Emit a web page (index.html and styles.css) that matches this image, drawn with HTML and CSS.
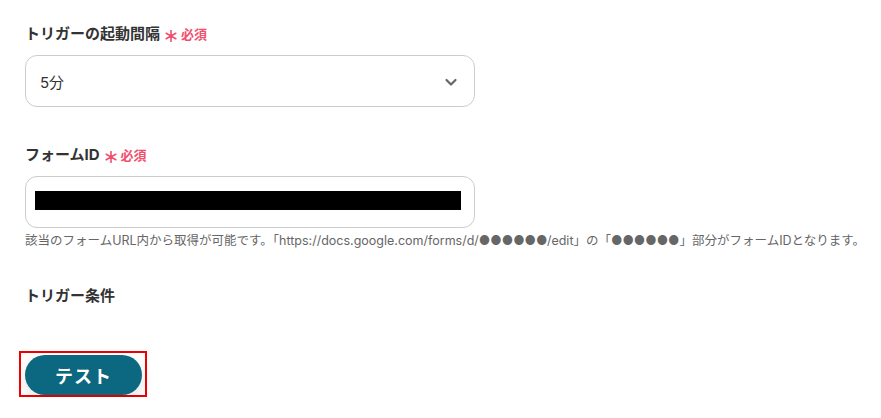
FILE: index.html
```html
<!DOCTYPE html>
<html lang="ja">
<head>
  <meta charset="UTF-8" />
  <title>トリガー設定</title>
  <link rel="stylesheet" href="styles.css">
</head>
<body>
  <div class="form">
    <div class="field">
      <label class="label">トリガーの起動間隔<span class="req"><svg class="mark" width="12" height="12" viewBox="0 0 12 12"><path d="M6 0.5 V11.5 M1.2 3.25 L10.8 8.75 M1.2 8.75 L10.8 3.25" stroke="currentColor" stroke-width="1.6" stroke-linecap="round" /></svg>必須</span></label>
      <div class="select">
        <span class="value">5分</span>
        <svg class="chevron" width="14" height="14" viewBox="0 0 14 14">
          <path d="M2.5 5 L7 9.5 L11.5 5" fill="none" stroke="#666" stroke-width="2.2" stroke-linecap="round" stroke-linejoin="round" />
        </svg>
      </div>
    </div>

    <div class="field">
      <label class="label">フォームID<span class="req"><svg class="mark" width="12" height="12" viewBox="0 0 12 12"><path d="M6 0.5 V11.5 M1.2 3.25 L10.8 8.75 M1.2 8.75 L10.8 3.25" stroke="currentColor" stroke-width="1.6" stroke-linecap="round" /></svg>必須</span></label>
      <div class="input">
        <div class="masked"></div>
      </div>
      <p class="hint">該当のフォームURL内から取得が可能です。「https://docs.google.com/forms/d/●●●●●●/edit」の「●●●●●●」部分がフォームIDとなります。</p>
    </div>

    <div class="field">
      <label class="label">トリガー条件</label>
    </div>

    <div class="actions">
      <div class="highlight">
        <button class="btn">テスト</button>
      </div>
    </div>
  </div>
</body>
</html>
```

FILE: styles.css
```css
:root {
  --text-color: #333333;
  --hint-color: #666666;
  --border-color: #cccccc;
  --required-color: #f0506e;
  --primary: #0c6781;
  --font-family: 'Inter', 'Noto Sans CJK JP', sans-serif;
}

* {
  box-sizing: border-box;
  margin: 0;
  padding: 0;
}

body {
  font-family: var(--font-family);
  color: var(--text-color);
  background: #ffffff;
}

.form {
  padding: 24px 25px 0 25px;
  display: flex;
  flex-direction: column;
}

.field {
  display: flex;
  flex-direction: column;
}

.label {
  font-size: 15px;
  font-weight: 700;
  line-height: 20px;
  display: flex;
  align-items: center;
  height: 20px;
}

.req {
  color: var(--required-color);
  font-size: 13px;
  font-weight: 700;
  margin-left: 5px;
  display: flex;
  align-items: center;
}

.mark {
  margin-right: 4px;
  margin-top: 3px;
}

.select,
.input {
  width: 450px;
  height: 52px;
  border: 1px solid var(--border-color);
  border-radius: 12px;
  margin-top: 11px;
  display: flex;
  align-items: center;
}

.select {
  justify-content: space-between;
  padding: 0 16px 0 14px;
  margin-bottom: 38px;
}

.value {
  font-size: 15px;
  font-weight: 400;
}

.chevron {
  margin-top: 1px;
}

.input {
  align-items: flex-start;
  padding: 14px 12px 0 9px;
}

.masked {
  width: 426px;
  height: 19px;
  background: #000000;
}

.hint {
  font-size: 12.5px;
  line-height: 16px;
  color: var(--hint-color);
  margin-top: 5px;
  margin-bottom: 37px;
  white-space: nowrap;
}

.actions {
  margin-top: 45px;
  margin-left: -6px;
}

.highlight {
  display: inline-block;
  border: 2px solid #ee0000;
  padding: 2px 3px 0 4px;
}

.btn {
  width: 117px;
  height: 40px;
  border: none;
  border-radius: 20px;
  background: var(--primary);
  color: #ffffff;
  font-family: var(--font-family);
  font-size: 18px;
  font-weight: 700;
  letter-spacing: 1px;
  box-shadow: 0 6px 16px rgba(0, 0, 0, 0.12);
  display: block;
}
```
